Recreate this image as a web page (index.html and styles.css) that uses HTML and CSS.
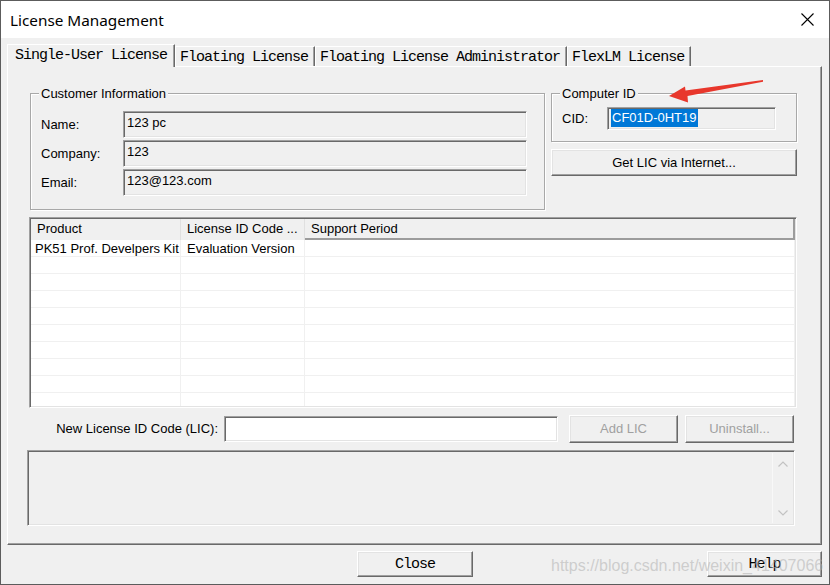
FILE: index.html
```html
<!DOCTYPE html>
<html>
<head>
<meta charset="utf-8">
<title>License Management</title>
<link rel="stylesheet" href="styles.css">
</head>
<body>
<div class="window">
  <div class="titlebar">
    <span class="title">License Management</span>
    <svg class="close-x" width="13" height="13" viewBox="0 0 13 13"><path d="M0.5 0.5 L12.5 12.5 M12.5 0.5 L0.5 12.5" stroke="#000" stroke-width="1.1" fill="none"/></svg>
  </div>
  <div class="content">
    <div class="tabs">
      <div class="tab active">Single-User License</div>
      <div class="tab">Floating License</div>
      <div class="tab">Floating License Administrator</div>
      <div class="tab">FlexLM License</div>
    </div>
    <div class="panel">
      <div class="toprow">
        <div class="group customer">
          <span class="legend">Customer Information</span>
          <div class="form-grid">
            <span class="lbl">Name:</span><div class="field">123 pc</div>
            <span class="lbl">Company:</span><div class="field">123</div>
            <span class="lbl">Email:</span><div class="field">123@123.com</div>
          </div>
        </div>
        <div class="rightcol">
          <div class="group computer">
            <span class="legend">Computer ID</span>
            <div class="cid-row">
              <span class="lbl cid-lbl">CID:</span>
              <div class="field cid-field"><span class="sel">CF01D-0HT19</span></div>
            </div>
          </div>
          <div class="btn getlic">Get LIC via Internet...</div>
        </div>
      </div>

      <div class="listview">
        <div class="lv-row lv-head">
          <div class="c1">Product</div>
          <div class="c2">License ID Code ...</div>
          <div class="c3">Support Period</div>
        </div>
        <div class="lv-body">
          <div class="lv-row"><div class="c1 first">PK51 Prof. Develpers Kit</div><div class="c2">Evaluation Version</div><div class="c3"></div></div>
          <div class="lv-row"><div class="c1"></div><div class="c2"></div><div class="c3"></div></div>
          <div class="lv-row"><div class="c1"></div><div class="c2"></div><div class="c3"></div></div>
          <div class="lv-row"><div class="c1"></div><div class="c2"></div><div class="c3"></div></div>
          <div class="lv-row"><div class="c1"></div><div class="c2"></div><div class="c3"></div></div>
          <div class="lv-row"><div class="c1"></div><div class="c2"></div><div class="c3"></div></div>
          <div class="lv-row"><div class="c1"></div><div class="c2"></div><div class="c3"></div></div>
          <div class="lv-row"><div class="c1"></div><div class="c2"></div><div class="c3"></div></div>
          <div class="lv-row"><div class="c1"></div><div class="c2"></div><div class="c3"></div></div>
          <div class="lv-row"><div class="c1"></div><div class="c2"></div><div class="c3"></div></div>
        </div>
      </div>

      <div class="licrow">
        <span class="lic-lbl">New License ID Code (LIC):</span>
        <div class="field lic-input"></div>
        <div class="btn disabled addlic">Add LIC</div>
        <div class="btn disabled uninstall">Uninstall...</div>
      </div>

      <div class="msgbox">
        <div class="msg-text"></div>
        <div class="msg-scroll">
          <svg width="10" height="6" viewBox="0 0 10 6"><path d="M0.5 5.5 L5 1 L9.5 5.5" stroke="#c2c2c2" stroke-width="1.2" fill="none"/></svg>
          <svg width="10" height="6" viewBox="0 0 10 6"><path d="M0.5 0.5 L5 5 L9.5 0.5" stroke="#c2c2c2" stroke-width="1.2" fill="none"/></svg>
        </div>
      </div>
    </div>

    <div class="footer">
      <div class="btn mono close">Close</div>
      <div class="btn mono help">Help</div>
    </div>
  </div>

  <svg class="arrow" width="110" height="30" viewBox="660 76 110 30">
    <polygon points="669,96 685,86.5 685.5,90.5 763,80 763,81.8 687.5,96 688,102.5" fill="#e8372c"/>
  </svg>
  <div class="watermark">https://blog.csdn.net/weixin_41407066</div>
</div>
</body>
</html>
```

FILE: styles.css
```css
html, body {
  margin: 0;
  padding: 0;
  background: #f0f0f0;
}

.window {
  position: relative;
  width: 830px;
  height: 585px;
  box-sizing: border-box;
  border: 1px solid #5c5c5c;
  background: #f0f0f0;
  display: flex;
  flex-direction: column;
  font-family: "Liberation Sans", Arial, sans-serif;
  font-size: 13px;
  color: #000;
  overflow: hidden;
}

.titlebar {
  height: 37px;
  flex: none;
  background: #fff;
  display: flex;
  align-items: center;
  justify-content: space-between;
  padding: 0 15px 0 9px;
}

.title {
  font-family: "Noto Sans", "Open Sans", sans-serif;
  font-size: 15.3px;
  color: #000;
}

.close-x {
  display: block;
}

.content {
  flex: 1;
  padding: 6px 7px 0 6px;
  display: flex;
  flex-direction: column;
}

/* tabs */
.tabs {
  display: flex;
  align-items: flex-end;
  height: 22px;
}

.tab {
  font-family: "Liberation Mono", "Courier New", monospace;
  font-size: 15px;
  letter-spacing: -1px;
  height: 17px;
  line-height: 17px;
  padding: 2px 6px 0 4px;
  border-top: 1px solid #fff;
  border-left: 1px solid #fff;
  border-right: 1px solid #696969;
  box-shadow: inset -1px 0 #a0a0a0;
  white-space: nowrap;
  box-sizing: content-box;
}

.tab.active {
  position: relative;
  z-index: 1;
  height: 22px;
  line-height: 22px;
  padding: 0 7px 0 7px;
  margin-bottom: -1px;
  background: #f0f0f0;
}

/* panel */
.panel {
  height: 479px;
  box-sizing: border-box;
  border: 1px solid;
  border-color: #fff #696969 #696969 #fff;
  box-shadow: inset -1px -1px #a0a0a0;
  display: flex;
  flex-direction: column;
  padding: 26px 0 0 22px;
}

.toprow {
  display: flex;
  gap: 6px;
  align-items: flex-start;
}

.group {
  position: relative;
  box-sizing: border-box;
  border: 1px solid #a8a8a8;
  box-shadow: 1px 1px #fff, inset 1px 1px #fff;
}

.legend {
  position: absolute;
  top: -8px;
  left: 8px;
  padding: 0 2px;
  background: #f0f0f0;
  line-height: 15px;
  white-space: nowrap;
}

.customer {
  width: 515px;
  height: 117px;
  padding: 17px 0 0 10px;
}

.form-grid {
  display: grid;
  grid-template-columns: 82px 404px;
  grid-auto-rows: 27px;
  row-gap: 2px;
  align-items: center;
}

.lbl {
  white-space: nowrap;
}

.field {
  box-sizing: border-box;
  border: 1px solid;
  border-color: #a0a0a0 #fff #fff #a0a0a0;
  box-shadow: inset 1px 1px #696969, inset -1px -1px #e3e3e3;
  background: #f0f0f0;
  padding: 3px 0 0 3px;
  height: 27px;
  line-height: 15px;
  white-space: nowrap;
}

.rightcol {
  display: flex;
  flex-direction: column;
  gap: 7px;
  width: 246px;
}

.computer {
  width: 246px;
  height: 49px;
  padding: 13px 0 0 10px;
}

.cid-row {
  display: flex;
  align-items: center;
}

.cid-lbl {
  width: 45px;
}

.cid-field {
  width: 169px;
  height: 23px;
  padding: 1px 0 0 3px;
}

.sel {
  display: inline-block;
  background: #0078d7;
  color: #fff;
  line-height: 18px;
  padding: 0 1px;
}

.btn {
  box-sizing: border-box;
  border: 1px solid;
  border-color: #fff #696969 #696969 #fff;
  box-shadow: inset -1px -1px #a0a0a0, inset 1px 1px #e3e3e3;
  background: #f0f0f0;
  display: flex;
  align-items: center;
  justify-content: center;
  white-space: nowrap;
}

.getlic {
  height: 27px;
  width: 246px;
}

.btn.disabled {
  color: #a0a0a0;
}

/* list view */
.listview {
  margin: 7px 0 0 -1px;
  width: 768px;
  height: 191px;
  box-sizing: border-box;
  border: 1px solid;
  border-color: #a0a0a0 #fff #fff #a0a0a0;
  box-shadow: inset 1px 1px #696969, inset -1px -1px #e3e3e3;
  padding: 1px;
  display: flex;
  flex-direction: column;
  overflow: hidden;
}

.lv-row {
  display: flex;
  height: 17px;
  box-sizing: border-box;
  border-bottom: 1px solid #f0f0f0;
  line-height: 18px;
  flex: none;
}

.lv-body {
  background: #fff;
  flex: 1;
  overflow: hidden;
  margin-right: 1px;
}

.lv-row > div {
  box-sizing: border-box;
  padding-left: 6px;
  white-space: nowrap;
  overflow: hidden;
}

.lv-row .c1 { width: 150px; border-right: 1px solid #f0f0f0; }
.lv-row .c2 { width: 124px; border-right: 1px solid #f0f0f0; }
.lv-row .c3 { flex: 1; }
.lv-row .c1.first { padding-left: 4px; }

.lv-head {
  height: 21px;
  line-height: 20px;
  background: #f0f0f0;
  border-bottom: none;
}

.lv-head .c1, .lv-head .c2 {
  border-right: 1px solid #e0e0e0;
}

.lv-head .c3 {
  border-right: 2px solid #9c9c9c;
  border-bottom: 2px solid #9c9c9c;
  line-height: 19px;
}

/* LIC row */
.licrow {
  display: flex;
  align-items: center;
  margin-top: 7px;
  height: 27px;
}

.lic-lbl {
  width: 188px;
  text-align: right;
  white-space: nowrap;
}

.lic-input {
  margin-left: 6px;
  width: 334px;
  height: 26px;
  background: #fff;
}

.addlic {
  margin-left: 11px;
  width: 109px;
  height: 28px;
}

.uninstall {
  margin-left: 7px;
  width: 109px;
  height: 28px;
}

/* message box */
.msgbox {
  margin: 8px 0 0 -3px;
  width: 768px;
  height: 76px;
  box-sizing: border-box;
  border: 1px solid;
  border-color: #a0a0a0 #fff #fff #a0a0a0;
  box-shadow: inset 1px 1px #696969, inset -1px -1px #e3e3e3;
  display: flex;
  padding: 2px;
}

.msg-text {
  flex: 1;
}

.msg-scroll {
  width: 20px;
  border-left: 1px solid #f8f8f8;
  display: flex;
  flex-direction: column;
  align-items: center;
  justify-content: space-between;
  padding: 8px 0 7px;
  box-sizing: border-box;
}

.msg-scroll svg {
  display: block;
}

/* footer */
.footer {
  display: flex;
  margin-top: 6px;
}

.mono {
  font-family: "Liberation Mono", "Courier New", monospace;
  font-size: 15px;
  letter-spacing: -1px;
}

.close {
  margin-left: 350px;
  width: 116px;
  height: 26px;
  padding-top: 1px;
}

.help {
  margin-left: auto;
  width: 115px;
  height: 26px;
  padding-top: 1px;
}

/* overlays */
.arrow {
  position: absolute;
  left: 659px;
  top: 75px;
}

.watermark {
  position: absolute;
  left: 550px;
  top: 556px;
  font-family: "Liberation Sans", Arial, sans-serif;
  font-size: 16px;
  color: rgba(175, 175, 175, 0.55);
  white-space: nowrap;
  pointer-events: none;
}
```
